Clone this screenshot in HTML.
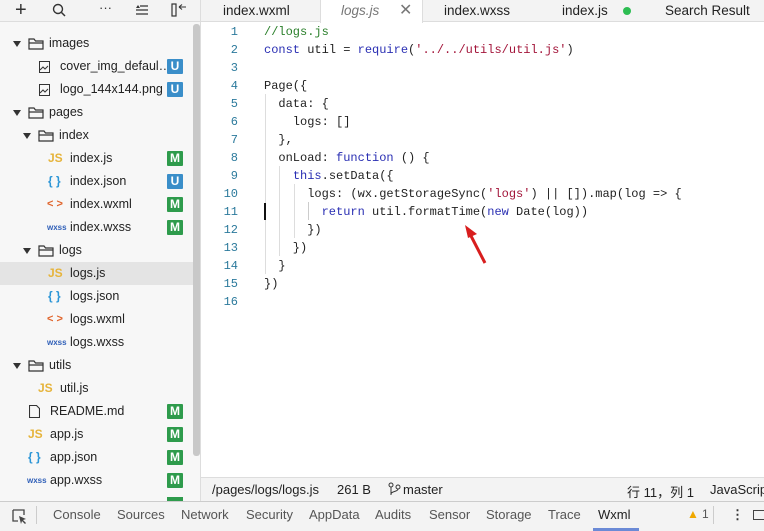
<!DOCTYPE html>
<html><head><meta charset="utf-8"><style>
*{margin:0;padding:0;box-sizing:border-box}
body{width:764px;height:531px;overflow:hidden;background:#fff;font-family:"Liberation Sans","Noto Sans CJK SC",sans-serif;font-size:13px;color:#222;position:relative}
.a{position:absolute;white-space:nowrap}
.row{position:absolute;left:0;width:193px;height:23px;line-height:23px;font-size:12.5px}
.badge{position:absolute;left:167px;top:4px;width:16px;height:15px;line-height:15px;text-align:center;color:#fff;font-size:12px;font-weight:bold;border-radius:1px}
.M{background:#2e9b4c}.U{background:#3a8ec9}
.tri{position:absolute;top:9px;width:0;height:0;border-left:4px solid transparent;border-right:4px solid transparent;border-top:6px solid #333}
.js{color:#e6b43c;font-size:12px;font-weight:bold}
.json{color:#2b95d6;font-weight:bold;font-size:12px}
.xml{color:#e0632a;font-weight:bold;font-size:11px}
.wxss{color:#2f5fb8;font-weight:bold;font-size:8px}
.code{font-family:"Liberation Mono",monospace;font-size:12px;line-height:18px}
.ln{position:absolute;left:205px;width:33px;text-align:right;color:#2c7a9c}
.kw{color:#2a2fb3}.str{color:#a3153a}.cm{color:#2a7f2a}
.tab{position:absolute;top:0;height:22px;line-height:21px;font-size:13.5px}
.bt{position:absolute;top:507px;font-size:13px;color:#555}
</style></head><body>
<div class="a" style="left:0;top:0;width:201px;height:22px;background:#f3f3f3;border-bottom:1px solid #ddd;border-right:1px solid #ddd"></div>
<div class="a" style="left:15px;top:-1px;font-size:20px;color:#333">+</div>
<svg class="a" style="left:52px;top:3px" width="15" height="15"><circle cx="6" cy="6" r="4.5" fill="none" stroke="#333" stroke-width="1.4"/><line x1="9.5" y1="9.5" x2="13" y2="13" stroke="#333" stroke-width="1.5"/></svg>
<div class="a" style="left:99px;top:0;font-size:13px;color:#333">···</div>
<svg class="a" style="left:135px;top:4px" width="14" height="12"><path d="M5 2h8M1 6h12M1 10h12" stroke="#333" stroke-width="1.3"/><path d="M1 4l2-3 2 3z" fill="#333"/></svg>
<svg class="a" style="left:171px;top:3px" width="16" height="14"><rect x="1" y="1" width="4" height="12" fill="none" stroke="#333" stroke-width="1.2"/><path d="M8 4h7M8 4l3-2.5M8 4l3 2.5" stroke="#333" stroke-width="1.1" fill="none"/></svg>
<div class="a" style="left:0;top:22px;width:201px;height:480px;background:#f7f7f7"></div>
<div class="a" style="left:193px;top:24px;width:7px;height:432px;background:#c8c8c8;border-radius:3px"></div>
<div class="row" style="top:262px;background:#e4e4e4"></div>

<div class="row" style="top:32px"><div class="tri" style="left:13px"></div><svg class="a" style="left:28px;top:5px" width="17" height="13"><path d="M1 2h5l1.5 2H15v8H1z M1 6h14" fill="none" stroke="#333" stroke-width="1.2"/></svg><span class="a" style="left:49px">images</span></div>
<div class="row" style="top:55px"><svg class="a" style="left:39px;top:6px" width="11" height="12"><rect x="0.5" y="0.5" width="10" height="11" fill="none" stroke="#333"/><path d="M1 9l3-3 2 2 3-3" fill="none" stroke="#333"/></svg><span class="a" style="left:60px">cover_img_defaul…</span><div class="badge U">U</div></div>
<div class="row" style="top:78px"><svg class="a" style="left:39px;top:6px" width="11" height="12"><rect x="0.5" y="0.5" width="10" height="11" fill="none" stroke="#333"/><path d="M1 9l3-3 2 2 3-3" fill="none" stroke="#333"/></svg><span class="a" style="left:60px">logo_144x144.png</span><div class="badge U">U</div></div>
<div class="row" style="top:101px"><div class="tri" style="left:13px"></div><svg class="a" style="left:28px;top:5px" width="17" height="13"><path d="M1 2h5l1.5 2H15v8H1z M1 6h14" fill="none" stroke="#333" stroke-width="1.2"/></svg><span class="a" style="left:49px">pages</span></div>
<div class="row" style="top:124px"><div class="tri" style="left:23px"></div><svg class="a" style="left:38px;top:5px" width="17" height="13"><path d="M1 2h5l1.5 2H15v8H1z M1 6h14" fill="none" stroke="#333" stroke-width="1.2"/></svg><span class="a" style="left:59px">index</span></div>
<div class="row" style="top:147px"><span class="a js" style="left:48px">JS</span><span class="a" style="left:70px">index.js</span><div class="badge M">M</div></div>
<div class="row" style="top:170px"><span class="a json" style="left:48px">{ }</span><span class="a" style="left:70px">index.json</span><div class="badge U">U</div></div>
<div class="row" style="top:193px"><span class="a xml" style="left:47px">&lt; &gt;</span><span class="a" style="left:70px">index.wxml</span><div class="badge M">M</div></div>
<div class="row" style="top:216px"><span class="a wxss" style="left:47px">wxss</span><span class="a" style="left:70px">index.wxss</span><div class="badge M">M</div></div>
<div class="row" style="top:239px"><div class="tri" style="left:23px"></div><svg class="a" style="left:38px;top:5px" width="17" height="13"><path d="M1 2h5l1.5 2H15v8H1z M1 6h14" fill="none" stroke="#333" stroke-width="1.2"/></svg><span class="a" style="left:59px">logs</span></div>
<div class="row" style="top:262px"><span class="a js" style="left:48px">JS</span><span class="a" style="left:70px">logs.js</span></div>
<div class="row" style="top:285px"><span class="a json" style="left:48px">{ }</span><span class="a" style="left:70px">logs.json</span></div>
<div class="row" style="top:308px"><span class="a xml" style="left:47px">&lt; &gt;</span><span class="a" style="left:70px">logs.wxml</span></div>
<div class="row" style="top:331px"><span class="a wxss" style="left:47px">wxss</span><span class="a" style="left:70px">logs.wxss</span></div>
<div class="row" style="top:354px"><div class="tri" style="left:13px"></div><svg class="a" style="left:28px;top:5px" width="17" height="13"><path d="M1 2h5l1.5 2H15v8H1z M1 6h14" fill="none" stroke="#333" stroke-width="1.2"/></svg><span class="a" style="left:49px">utils</span></div>
<div class="row" style="top:377px"><span class="a js" style="left:38px">JS</span><span class="a" style="left:60px">util.js</span></div>
<div class="row" style="top:400px"><svg class="a" style="left:29px;top:5px" width="11" height="13"><path d="M0.5 0.5h7l3 3v9h-10z" fill="none" stroke="#333" stroke-width="1.1"/></svg><span class="a" style="left:50px">README.md</span><div class="badge M">M</div></div>
<div class="row" style="top:423px"><span class="a js" style="left:28px">JS</span><span class="a" style="left:50px">app.js</span><div class="badge M">M</div></div>
<div class="row" style="top:446px"><span class="a json" style="left:28px">{ }</span><span class="a" style="left:50px">app.json</span><div class="badge M">M</div></div>
<div class="row" style="top:469px"><span class="a wxss" style="left:27px">wxss</span><span class="a" style="left:50px">app.wxss</span><div class="badge M">M</div></div>
<div class="a" style="left:167px;top:497px;width:16px;height:5px;background:#2e9b4c"></div>
<div class="a" style="left:200px;top:22px;width:1px;height:480px;background:#ddd"></div>

<div class="a" style="left:201px;top:0;width:563px;height:22px;background:#f3f3f3;border-bottom:1px solid #ddd"></div>
<div class="a" style="left:320px;top:0;width:103px;height:23px;background:#fff;border-left:1px solid #ddd;border-right:1px solid #ddd"></div>
<div class="tab" style="left:223px">index.wxml</div>
<div class="tab" style="left:341px;font-style:italic;color:#777">logs.js</div>
<div class="tab" style="left:399px;color:#777;font-size:16px">✕</div>
<div class="tab" style="left:444px">index.wxss</div>
<div class="tab" style="left:562px">index.js</div>
<div class="a" style="left:623px;top:7px;width:8px;height:8px;border-radius:50%;background:#2dbd52"></div>
<div class="tab" style="left:665px">Search Result</div>

<div class="code">
<div class="ln a" style="top:23px">1<br>2<br>3<br>4<br>5<br>6<br>7<br>8<br>9<br>10<br>11<br>12<br>13<br>14<br>15<br>16</div>
<div class="a" style="left:264px;top:23px;color:#222"><span class="cm">//logs.js</span><br><span class="kw">const</span> util = <span class="kw">require</span>(<span class="str">'../../utils/util.js'</span>)<br>&nbsp;<br>Page({<br>  data: {<br>    logs: []<br>  },<br>  onLoad: <span class="kw">function</span> () {<br>    <span class="kw">this</span>.setData({<br>      logs: (wx.getStorageSync(<span class="str">'logs'</span>) || []).map(log =&gt; {<br>        <span class="kw">return</span> util.formatTime(<span class="kw">new</span> Date(log))<br>      })<br>    })<br>  }<br>})</div>
</div>
<style>.code .a{white-space:pre}</style>
<div class="a" style="left:265px;top:94px;width:1px;height:180px;background:#ddd"></div>
<div class="a" style="left:279px;top:166px;width:1px;height:90px;background:#ddd"></div>
<div class="a" style="left:294px;top:184px;width:1px;height:54px;background:#ddd"></div>
<div class="a" style="left:308px;top:202px;width:1px;height:18px;background:#ccc"></div>
<div class="a" style="left:264px;top:203px;width:2px;height:17px;background:#111"></div>
<svg class="a" style="left:460px;top:222px" width="30" height="45"><path d="M25 41L10 12" stroke="#d81e1e" stroke-width="3"/><path d="M5 3l12 9-9 4z" fill="#d81e1e"/></svg>

<div class="a" style="left:201px;top:477px;width:563px;height:24px;background:#f3f3f3;border-top:1px solid #ddd"></div>
<div class="a" style="left:212px;top:482px">/pages/logs/logs.js</div>
<div class="a" style="left:337px;top:482px">261 B</div>
<svg class="a" style="left:388px;top:482px" width="13" height="14"><circle cx="3" cy="3" r="2" fill="none" stroke="#333"/><circle cx="10" cy="5" r="2" fill="none" stroke="#333"/><path d="M3 5v8M10 7c0 3-7 2-7 5" fill="none" stroke="#333"/></svg>
<div class="a" style="left:403px;top:482px">master</div>
<div class="a" style="left:627px;top:482px">行 11，列 1</div>
<div class="a" style="left:710px;top:482px">JavaScript</div>

<div class="a" style="left:0;top:501px;width:764px;height:30px;background:#f3f3f3;border-top:1px solid #ccc"></div>
<svg class="a" style="left:12px;top:509px" width="16" height="16"><path d="M1 1h11v5M1 1v11h5" fill="none" stroke="#444" stroke-width="1.3"/><path d="M7 7l7 3-3 1 3 3-1 1-3-3-1 3z" fill="#444"/></svg>
<div class="a" style="left:36px;top:506px;width:1px;height:18px;background:#ccc"></div>
<div class="bt" style="left:53px">Console</div>
<div class="bt" style="left:117px">Sources</div>
<div class="bt" style="left:181px">Network</div>
<div class="bt" style="left:246px">Security</div>
<div class="bt" style="left:309px">AppData</div>
<div class="bt" style="left:375px">Audits</div>
<div class="bt" style="left:429px">Sensor</div>
<div class="bt" style="left:486px">Storage</div>
<div class="bt" style="left:548px">Trace</div>
<div class="bt" style="left:598px;color:#222">Wxml</div>
<div class="a" style="left:593px;top:528px;width:46px;height:3px;background:#6b8ad6"></div>
<div class="bt" style="left:687px;color:#f0a800;font-size:12px">▲</div>
<div class="bt" style="left:702px;font-size:12px">1</div>
<div class="a" style="left:713px;top:506px;width:1px;height:18px;background:#ccc"></div>
<div class="bt" style="left:731px;font-weight:bold;color:#333">⋮</div>
<div class="a" style="left:753px;top:510px;width:12px;height:10px;border:1.5px solid #444"></div>
</body></html>
